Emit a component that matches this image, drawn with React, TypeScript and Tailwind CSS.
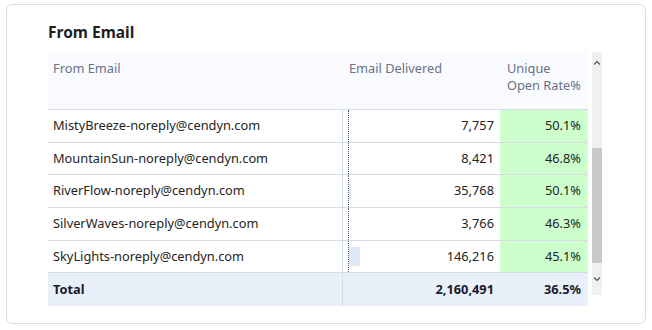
const ROWS = [
  { email: 'MistyBreeze-noreply@cendyn.com', delivered: '7,757', rate: '50.1%', bar: 0, h: 'h-[33px]' },
  { email: 'MountainSun-noreply@cendyn.com', delivered: '8,421', rate: '46.8%', bar: 0, h: 'h-[32px]' },
  { email: 'RiverFlow-noreply@cendyn.com', delivered: '35,768', rate: '50.1%', bar: 2, h: 'h-[33px]' },
  { email: 'SilverWaves-noreply@cendyn.com', delivered: '3,766', rate: '46.3%', bar: 0, h: 'h-[33px]' },
  { email: 'SkyLights-noreply@cendyn.com', delivered: '146,216', rate: '45.1%', bar: 11, h: 'h-[32px]' },
];

export default function App() {
  return (
    <div className="w-[652px] h-[330px] bg-white pt-[4px] pl-[6px] font-['Noto_Sans',sans-serif]">
      <div className="w-[640px] h-[320px] border border-[#d6dee9] rounded-[6px] pl-[41px] pt-[17px]">
        <h2 className="text-[15.5px] font-bold text-[#1f1f1f] leading-[20px] h-[30px]">From Email</h2>

        <div className="flex">
          {/* Table */}
          <div className="w-[540px] text-[12.8px]">
            {/* Header */}
            <div className="grid grid-cols-[295px_157px_88px] h-[58px] bg-[#f9fbfe] border-b border-[#d3dce8] text-[#6b7089] leading-[17px]">
              <div className="pl-[5px] pt-[8px]">From Email</div>
              <div className="pl-[6px] pt-[8px]">Email Delivered</div>
              <div className="pl-[7px] pt-[8px]">
                <div>Unique</div>
                <div>Open Rate%</div>
              </div>
            </div>

            {/* Body */}
            {ROWS.map((r) => (
              <div
                key={r.email}
                className={`grid grid-cols-[295px_157px_88px] ${r.h} border-b border-[#d3dce8] text-[#252423]`}
              >
                <div className="pl-[5px] flex items-center border-r border-[#d3dce8]">{r.email}</div>
                <div className="relative flex items-center justify-end pr-[6px]">
                  <div className="absolute left-[5px] top-0 bottom-0 border-l border-dotted border-[#555a66]" />
                  {r.bar > 0 && (
                    <div
                      className="absolute left-[6px] top-[6px] h-[19px] bg-[#e1e8f5]"
                      style={{ width: r.bar }}
                    />
                  )}
                  <span className="relative">{r.delivered}</span>
                </div>
                <div className="flex items-center justify-end pr-[7px] bg-[#ccffcc]">{r.rate}</div>
              </div>
            ))}

            {/* Total */}
            <div className="grid grid-cols-[295px_157px_88px] h-[33px] bg-[#e9f0f9] font-bold text-[#1a1a2e]">
              <div className="pl-[5px] flex items-center border-r border-[#d3dce8]">Total</div>
              <div className="flex items-center justify-end pr-[6px]">2,160,491</div>
              <div className="flex items-center justify-end pr-[7px]">36.5%</div>
            </div>
          </div>

          {/* Scrollbar */}
          <div className="ml-[4px] w-[10px] h-[243px] bg-[#f0f0f0] flex flex-col items-center">
            <svg width="10" height="10" viewBox="0 0 10 10" className="mt-[6px]">
              <path d="M2 6.5 L5 3.5 L8 6.5" fill="none" stroke="#555" strokeWidth="1.2" />
            </svg>
            <div className="mt-[80px] w-[10px] h-[115px] bg-[#c9c9c9]" />
            <svg width="10" height="10" viewBox="0 0 10 10" className="mt-[11px]">
              <path d="M2 3.5 L5 6.5 L8 3.5" fill="none" stroke="#555" strokeWidth="1.2" />
            </svg>
          </div>
        </div>
      </div>
    </div>
  );
}
